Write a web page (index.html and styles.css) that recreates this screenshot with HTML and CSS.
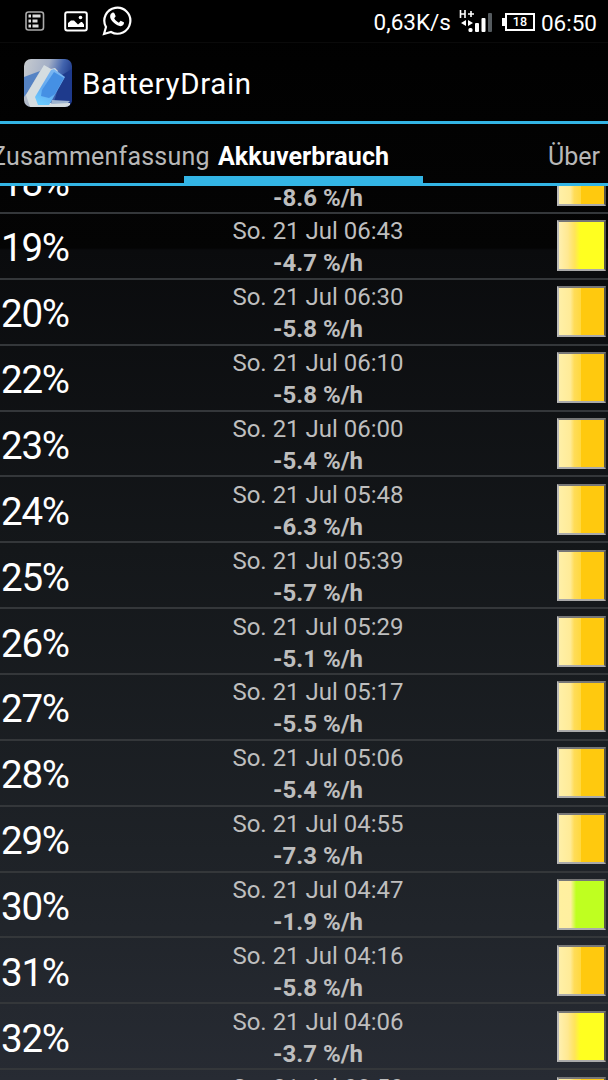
FILE: index.html
```
<!DOCTYPE html>
<html lang="de">
  <head>
    <meta charset="UTF-8" />
    <meta name="viewport" content="width=device-width, initial-scale=1.0" />
    <title>BatteryDrain</title>
    <link rel="stylesheet" href="styles.css">
  </head>
  <body>
    <div class="status-bar">
      <svg class="icon-list" width="20" height="20" viewBox="0 0 20 20">
        <rect x="1" y="1" width="17.5" height="18" rx="2.5" fill="none" stroke="#aaa" stroke-width="1.6" />
        <path d="M3.5 5H6M7.5 5h8M3.5 10H6M7.5 10h5M3.5 15H6M7.5 15h6" stroke="#ddd" stroke-width="2.8" />
      </svg>
      <svg class="icon-image" width="24" height="21" viewBox="0 0 24 21">
        <rect x="1.2" y="1.2" width="21.6" height="18.4" rx="2" fill="none" stroke="#fff" stroke-width="2" />
        <path d="M4 16v-4l3-2.500h3l4 4 3-2.500h1l2 2.500V16z" fill="#fff" />
        <circle cx="16.5" cy="6.5" r="1.8" fill="#fff" />
      </svg>
      <svg class="icon-whatsapp" width="30" height="31" viewBox="0 0 30 31">
        <path d="M2 29l2-7A13 13 0 1 1 9 27z" fill="none" stroke="#fff" stroke-width="2.2" />
        <path d="M10 8c1-.6 2-.5 2.400.3l1.300 3-1.500 2c1 2 2.500 3.400 4.700 4.400l1.700-2 3.200 1.600c.6.4-.1 2.800-1.700 3.500-2 .9-5 0-8-2.700C9 15.500 7.500 12.500 8.300 10c.3-.9.900-1.600 1.700-2z" fill="#fff" />
      </svg>
      <span class="speed">0,63K/s</span>
      <svg class="icon-signal" width="34" height="24" viewBox="0 0 34 24">
        <path d="M1.500 1v8M6 1v8M1.500 5H6M9 5h6M12 2v6" fill="none" stroke="#fff" stroke-width="1.600" />
        <path d="M7 11v6l-5-3zM9 11v6l5-3z" fill="#fff" />
        <rect x="9.500" y="19" width="4" height="4" rx="1.500" fill="#fff" />
        <rect x="16" y="14" width="4" height="9" rx="1" fill="#fff" />
        <rect x="22.500" y="9" width="4" height="14" rx="1" fill="#fff" />
        <rect x="29" y="4" width="4" height="19" rx="1" fill="#555b5f" />
      </svg>
      <div class="battery"><span>18</span></div>
      <span class="clock">06:50</span>
    </div>

    <div class="action-bar">
      <svg class="app-icon" width="48" height="48" viewBox="0 0 48 48">
        <defs>
          <linearGradient id="iconBg" x1="0" y1="0" x2="1" y2="0.3">
            <stop offset="0" stop-color="#c8ccd0" />
            <stop offset="0.5" stop-color="#a3afc6" />
            <stop offset="0.78" stop-color="#4264ae" />
            <stop offset="1" stop-color="#1f3a88" />
          </linearGradient>
          <linearGradient id="iconFace" x1="0.7" y1="0" x2="0.3" y2="1">
            <stop offset="0" stop-color="#7cb8f2" />
            <stop offset="0.6" stop-color="#62a9f0" />
            <stop offset="1" stop-color="#6bcbff" />
          </linearGradient>
          <clipPath id="iconClip"><rect width="48" height="48" rx="7" /></clipPath>
        </defs>
        <g clip-path="url(#iconClip)">
          <rect width="48" height="48" fill="url(#iconBg)" />
          <path d="M0 18l16-6L3 34 0 38z" fill="#5583c4" />
          <path d="M38 16l10-6v33H30z" fill="#1e3a8c" />
          <path d="M2 36L20 6l7 4 4-1 3 3-18 32 30 0v4H6z" fill="#d5dde0" />
          <path d="M11 38L27 11l3-1 11 8-13 23-3 5H14z" fill="url(#iconFace)" />
          <path d="M18 31l12-18 10 6-9 16-6 4-8-2z" fill="#4590e4" />
          <path d="M28 41l18 1-2 2-17 1z" fill="#9db4d0" />
        </g>
      </svg>
      <h1>BatteryDrain</h1>
    </div>

    <div class="tabs">
      <span class="tab tab-prev">Zusammenfassung</span>
      <span class="tab active">Akkuverbrauch</span>
      <span class="tab tab-next">Über</span>
    </div>

    <div class="list">
      <div class="row">
        <span class="level">18%</span>
        <div class="info"><span class="date">So. 21 Jul 06:50</span><b>-8.6 %/h</b></div>
        <i class="swatch orange"></i>
      </div>
      <div class="row">
        <span class="level">19%</span>
        <div class="info"><span class="date">So. 21 Jul 06:43</span><b>-4.7 %/h</b></div>
        <i class="swatch yellow"></i>
      </div>
      <div class="row">
        <span class="level">20%</span>
        <div class="info"><span class="date">So. 21 Jul 06:30</span><b>-5.8 %/h</b></div>
        <i class="swatch orange"></i>
      </div>
      <div class="row">
        <span class="level">22%</span>
        <div class="info"><span class="date">So. 21 Jul 06:10</span><b>-5.8 %/h</b></div>
        <i class="swatch orange"></i>
      </div>
      <div class="row">
        <span class="level">23%</span>
        <div class="info"><span class="date">So. 21 Jul 06:00</span><b>-5.4 %/h</b></div>
        <i class="swatch orange"></i>
      </div>
      <div class="row">
        <span class="level">24%</span>
        <div class="info"><span class="date">So. 21 Jul 05:48</span><b>-6.3 %/h</b></div>
        <i class="swatch orange"></i>
      </div>
      <div class="row">
        <span class="level">25%</span>
        <div class="info"><span class="date">So. 21 Jul 05:39</span><b>-5.7 %/h</b></div>
        <i class="swatch orange"></i>
      </div>
      <div class="row">
        <span class="level">26%</span>
        <div class="info"><span class="date">So. 21 Jul 05:29</span><b>-5.1 %/h</b></div>
        <i class="swatch orange"></i>
      </div>
      <div class="row">
        <span class="level">27%</span>
        <div class="info"><span class="date">So. 21 Jul 05:17</span><b>-5.5 %/h</b></div>
        <i class="swatch orange"></i>
      </div>
      <div class="row">
        <span class="level">28%</span>
        <div class="info"><span class="date">So. 21 Jul 05:06</span><b>-5.4 %/h</b></div>
        <i class="swatch orange"></i>
      </div>
      <div class="row">
        <span class="level">29%</span>
        <div class="info"><span class="date">So. 21 Jul 04:55</span><b>-7.3 %/h</b></div>
        <i class="swatch orange"></i>
      </div>
      <div class="row">
        <span class="level">30%</span>
        <div class="info"><span class="date">So. 21 Jul 04:47</span><b>-1.9 %/h</b></div>
        <i class="swatch green"></i>
      </div>
      <div class="row">
        <span class="level">31%</span>
        <div class="info"><span class="date">So. 21 Jul 04:16</span><b>-5.8 %/h</b></div>
        <i class="swatch orange"></i>
      </div>
      <div class="row">
        <span class="level">32%</span>
        <div class="info"><span class="date">So. 21 Jul 04:06</span><b>-3.7 %/h</b></div>
        <i class="swatch yellow"></i>
      </div>
      <div class="row">
        <span class="level">33%</span>
        <div class="info"><span class="date">So. 21 Jul 03:50</span><b>-5.2 %/h</b></div>
        <i class="swatch orange"></i>
      </div>
    </div>
  </body>
</html>
```
FILE: styles.css
```
* {
  box-sizing: border-box;
}
body {
  margin: 0;
  height: 1080px;
  overflow: hidden;
  display: flex;
  flex-direction: column;
  background: linear-gradient(#000 0, #040404 248px, #0a0b0d 250px, #14171a 550px, #1e2227 850px, #272b33 1080px);
  color: #fff;
  font-family: Roboto, sans-serif;
  white-space: nowrap;
}

/* Status bar */
.status-bar {
  flex: none;
  height: 43px;
  display: flex;
  align-items: center;
  padding: 0 11px 0 25px;
  background: #000;
  border-bottom: 1px solid #0a0a0a;
  font-size: 22.5px;
}
.icon-image {
  margin-left: 19px;
}
.icon-whatsapp {
  margin-left: 14px;
  margin-bottom: 2px;
}
.speed {
  margin: 2px 8px 0 auto;
}
.battery {
  width: 30px;
  height: 18px;
  margin: 2px 6px 0 12px;
  border: 2px solid #fff;
  position: relative;
  font-size: 12.5px;
  font-weight: 500;
  line-height: 14px;
  text-align: center;
}
.battery::before {
  content: "";
  position: absolute;
  left: -5px;
  top: 3px;
  width: 3px;
  height: 8px;
  background: #fff;
}
.clock {
  margin-top: 3px;
}

/* Action bar */
.action-bar {
  flex: none;
  height: 81px;
  display: flex;
  align-items: center;
  padding: 1px 24px 0;
  border-bottom: 3px solid #33b5e5;
}
.action-bar h1 {
  margin: 3px 0 0 10px;
  font-size: 29.5px;
  font-weight: normal;
  letter-spacing: 0.65px;
}

/* Tabs */
.tabs {
  flex: none;
  height: 62px;
  display: flex;
  border-bottom: 3px solid #33b5e5;
  font-size: 25px;
  line-height: 65px;
}
.tab {
  color: #b8b8b8;
}
.tab-prev {
  margin-left: -9px;
  letter-spacing: 0.2px;
}
.tab.active {
  position: relative;
  height: 59px;
  margin-left: 8.3px;
  color: #fff;
  font-weight: bold;
  letter-spacing: 0.1px;
}
.tab.active::after {
  content: "";
  position: absolute;
  left: -34px;
  bottom: 0;
  width: 239px;
  height: 7px;
  background: #33b5e5;
}
.tab-next {
  margin-left: auto;
  margin-right: 8px;
}

/* Battery history */
.list {
  flex: 1;
  min-height: 0;
  overflow: hidden;
}
.row {
  height: 65.86px;
  display: grid;
  grid-template-columns: 80px 1fr 51px;
  grid-template-rows: 100%;
  align-items: center;
  border-bottom: 2px solid #34373a;
}
.row:first-child {
  margin-top: -37.9px;
}
.level {
  padding: 4px 0 0 1px;
  font-size: 38.5px;
  letter-spacing: -1.2px;
}
.info {
  display: flex;
  flex-direction: column;
  align-items: center;
  padding: 3px 1px 0 0;
  color: #bebebe;
  font-size: 24px;
  line-height: 32px;
}
.swatch {
  width: 49px;
  height: 51px;
  border: 2px solid;
  border-color: #777 #55534a #aaa #bbb;
}
.orange {
  background: linear-gradient(90deg, #fff0a8 0, #ffeb98 25%, #ffdc58 34%, #ffd840 48%, #ffc90e 50%);
}
.yellow {
  background: linear-gradient(90deg, #fff0b0 0, #ffe890 20%, #ffe45a 35%, #ffff20 48%);
}
.green {
  background: linear-gradient(90deg, #fff0a0 0, #ffefa0 26%, #bfff20 38%);
}
```
